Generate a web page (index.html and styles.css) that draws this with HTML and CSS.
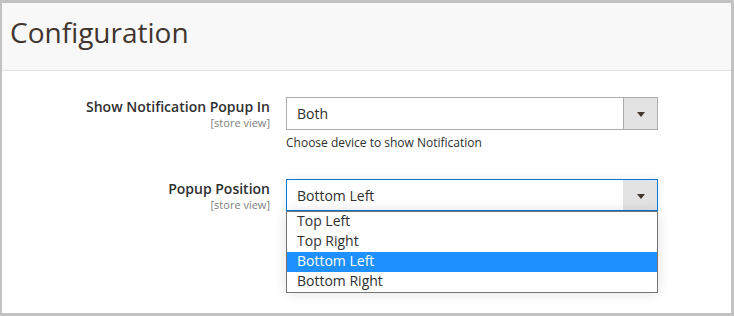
FILE: index.html
```html
<!DOCTYPE html>
<html lang="en">

<head>
    <meta charset="UTF-8">
    <title>Configuration</title>
    <link rel="stylesheet" href="styles.css">
</head>

<body>
    <div class="panel">
        <header class="page-header">
            <h1>Configuration</h1>
        </header>

        <div class="form">
            <!-- Show Notification Popup In -->
            <div class="field">
                <div class="label">
                    <span class="label-text">Show Notification Popup In</span>
                    <span class="scope">[store view]</span>
                </div>
                <div class="control">
                    <div class="select">
                        <span class="select-value">Both</span>
                        <span class="select-arrow"></span>
                    </div>
                    <p class="note">Choose device to show Notification</p>
                </div>
            </div>

            <!-- Popup Position -->
            <div class="field">
                <div class="label">
                    <span class="label-text">Popup Position</span>
                    <span class="scope">[store view]</span>
                </div>
                <div class="control">
                    <div class="select-wrap">
                        <div class="select select-open">
                            <span class="select-value">Bottom Left</span>
                            <span class="select-arrow"></span>
                        </div>
                        <ul class="options">
                            <li>Top Left</li>
                            <li>Top Right</li>
                            <li class="selected">Bottom Left</li>
                            <li>Bottom Right</li>
                        </ul>
                    </div>
                </div>
            </div>
        </div>
    </div>
</body>

</html>
```

FILE: styles.css
```css
body {
    margin: 0;
    padding: 3px 3px 3px 2px;
    background-color: #c2c2c2;
    font-family: "Open Sans", "Liberation Sans", sans-serif;
    color: #303030;
}

.panel {
    background-color: white;
    height: 310px;
}

.page-header {
    background-color: #f8f8f8;
    border-bottom: 1px solid #e3e3e3;
    height: 67px;
    padding-left: 8px;
}

.page-header h1 {
    margin: 0;
    font-size: 28px;
    font-weight: 400;
    line-height: 58px;
    color: #41362f;
}

.form {
    padding-top: 26px;
}

.field {
    display: grid;
    grid-template-columns: 268px 372px;
    column-gap: 16px;
    margin-bottom: 28px;
}

.label {
    display: flex;
    flex-direction: column;
    align-items: flex-end;
    text-align: right;
}

.label-text {
    font-size: 14px;
    font-weight: 600;
    line-height: 20px;
    color: #303030;
}

.scope {
    font-size: 11px;
    line-height: 12px;
    color: #808080;
}

.select {
    display: flex;
    align-items: center;
    height: 31px;
    border: 1px solid #adadad;
    background-color: white;
}

.select-value {
    flex: 1;
    padding-left: 10px;
    font-size: 14px;
    color: #303030;
}

.select-arrow {
    width: 33px;
    height: 100%;
    border-left: 1px solid #adadad;
    background-color: #e3e3e3;
    position: relative;
}

.select-arrow::after {
    content: "";
    position: absolute;
    left: 13px;
    top: 14px;
    border-left: 4px solid transparent;
    border-right: 4px solid transparent;
    border-top: 5px solid #41362f;
}

.note {
    margin: 5px 0 0;
    font-size: 12px;
    line-height: 16px;
    color: #303030;
}

.select-wrap {
    position: relative;
    box-shadow: 0 0 10px rgba(0, 0, 0, 0.08);
}

.select-open {
    height: 30px;
    border-color: #007bdb;
}

.select-open .select-arrow {
    border-left-color: #e3e3e3;
}

.options {
    position: absolute;
    left: 0;
    right: 0;
    top: 32px;
    margin: 0;
    padding: 0;
    list-style: none;
    background-color: white;
    border: 1px solid #767676;
    box-shadow: 0 0 12px rgba(0, 0, 0, 0.12);
}

.options li {
    height: 20px;
    line-height: 18px;
    padding-left: 10px;
    font-size: 14px;
    color: #303030;
}

.options li.selected {
    background-color: #1e90ff;
    color: white;
}
```
